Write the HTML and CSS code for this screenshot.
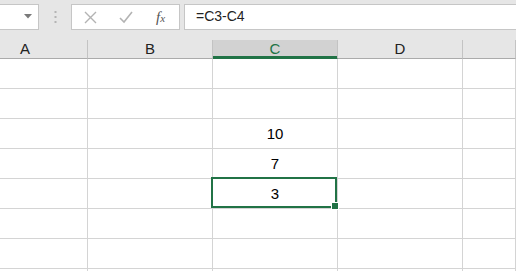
FILE: index.html
```html
<!DOCTYPE html>
<html>
<head>
<meta charset="utf-8">
<link rel="stylesheet" href="styles.css">
</head>
<body>
<div class="toolbar">
  <div class="namebox">
    <svg class="arrow" width="8" height="5" viewBox="0 0 8 5"><path d="M0 0H8L4 4.5Z" fill="#7a7a7a"/></svg>
  </div>
  <div class="dots">
    <svg width="3" height="12" viewBox="0 0 3 12"><rect x="0.5" y="0" width="2" height="2" fill="#b4b4b4"/><rect x="0.5" y="5" width="2" height="2" fill="#b4b4b4"/><rect x="0.5" y="10" width="2" height="2" fill="#b4b4b4"/></svg>
  </div>
  <div class="fxbox">
    <svg class="ico" width="13" height="13" viewBox="0 0 13 13"><path d="M1 1L12 12M12 1L1 12" stroke="#b3b3b3" stroke-width="1.4" fill="none"/></svg>
    <svg class="ico" width="14" height="13" viewBox="0 0 14 13"><path d="M1 7L5 11L13 1" stroke="#b3b3b3" stroke-width="1.6" fill="none"/></svg>
    <span class="fx">f<span class="x">x</span></span>
  </div>
  <div class="formula">=C3-C4</div>
</div>
<div class="spacer"></div>
<div class="sheet">
  <div class="grid">
    <div class="hd">A</div><div class="hd">B</div><div class="hd sel">C</div><div class="hd">D</div><div class="hd"></div>
    <div class="c"></div><div class="c"></div><div class="c"></div><div class="c"></div><div class="c"></div>
    <div class="c"></div><div class="c"></div><div class="c"></div><div class="c"></div><div class="c"></div>
    <div class="c"></div><div class="c"></div><div class="c num">10</div><div class="c"></div><div class="c"></div>
    <div class="c"></div><div class="c"></div><div class="c num">7</div><div class="c"></div><div class="c"></div>
    <div class="c"></div><div class="c"></div><div class="c num active">3<span class="selbox"><span class="handle"></span></span></div><div class="c"></div><div class="c"></div>
    <div class="c"></div><div class="c"></div><div class="c"></div><div class="c"></div><div class="c"></div>
    <div class="c"></div><div class="c"></div><div class="c"></div><div class="c"></div><div class="c"></div>
    <div class="c"></div><div class="c"></div><div class="c"></div><div class="c"></div><div class="c"></div>
  </div>
</div>
</body>
</html>
```

FILE: styles.css
```css
html, body {
  margin: 0;
  padding: 0;
  width: 516px;
  height: 271px;
  overflow: hidden;
  background: #e6e6e6;
  font-family: "Liberation Sans", Arial, sans-serif;
}
.toolbar {
  height: 30px;
  box-sizing: border-box;
  padding-top: 4px;
  display: flex;
  align-items: flex-start;
}
.namebox {
  width: 40px;
  height: 26px;
  box-sizing: border-box;
  margin-left: -1px;
  background: #fff;
  border: 1px solid #c6c6c6;
  display: flex;
  align-items: center;
  justify-content: flex-end;
  padding-right: 6px;
}
.arrow { display: block; margin-top: -1px; }
.dots {
  width: 32px;
  height: 26px;
  display: flex;
  align-items: center;
  justify-content: center;
}
.dots svg { display: block; }
.fxbox {
  width: 109px;
  height: 26px;
  box-sizing: border-box;
  background: #fff;
  border: 1px solid #c6c6c6;
  display: flex;
  align-items: center;
  padding-left: 12px;
  gap: 22px;
}
.ico { display: block; }
.fx {
  font-family: "Liberation Serif", "Times New Roman", serif;
  font-style: italic;
  font-size: 15px;
  color: #555;
  margin-left: 1px;
}
.fx .x { font-size: 11px; }
.formula {
  flex: 1;
  height: 26px;
  box-sizing: border-box;
  margin-left: 4px;
  background: #fff;
  border: 1px solid #c6c6c6;
  border-right: none;
  font-size: 14px;
  color: #222;
  padding-left: 11px;
  line-height: 23px;
}
.spacer { height: 10px; }
.sheet {
  background: #fff;
  margin-left: -37px;
  overflow: hidden;
}
.grid {
  display: grid;
  grid-template-columns: 125px 125px 125px 125px 1fr;
  grid-auto-rows: 30px;
  grid-template-rows: 19px;
}
.hd {
  background: #e6e6e6;
  box-sizing: border-box;
  border-right: 1px solid #c3c3c3;
  border-bottom: 1px solid #ababab;
  text-align: center;
  font-size: 15px;
  line-height: 18px;
  color: #222;
}
.hd.sel {
  background: #d2d2d2;
  color: #217346;
  box-shadow: inset 0 -2px 0 #217346;
  border-bottom-color: #217346;
}
.c {
  box-sizing: border-box;
  border-right: 1px solid #d4d4d4;
  border-bottom: 1px solid #d4d4d4;
  background: #fff;
}
.num {
  text-align: center;
  font-size: 15px;
  line-height: 30px;
  color: #000;
}
.active { position: relative; }
.selbox {
  position: absolute;
  top: -2px;
  left: -2px;
  right: 0;
  bottom: 0;
  border: 2px solid #217346;
}
.handle {
  position: absolute;
  right: -4px;
  bottom: -4px;
  width: 6px;
  height: 6px;
  background: #217346;
  border: 1px solid #fff;
}
```
